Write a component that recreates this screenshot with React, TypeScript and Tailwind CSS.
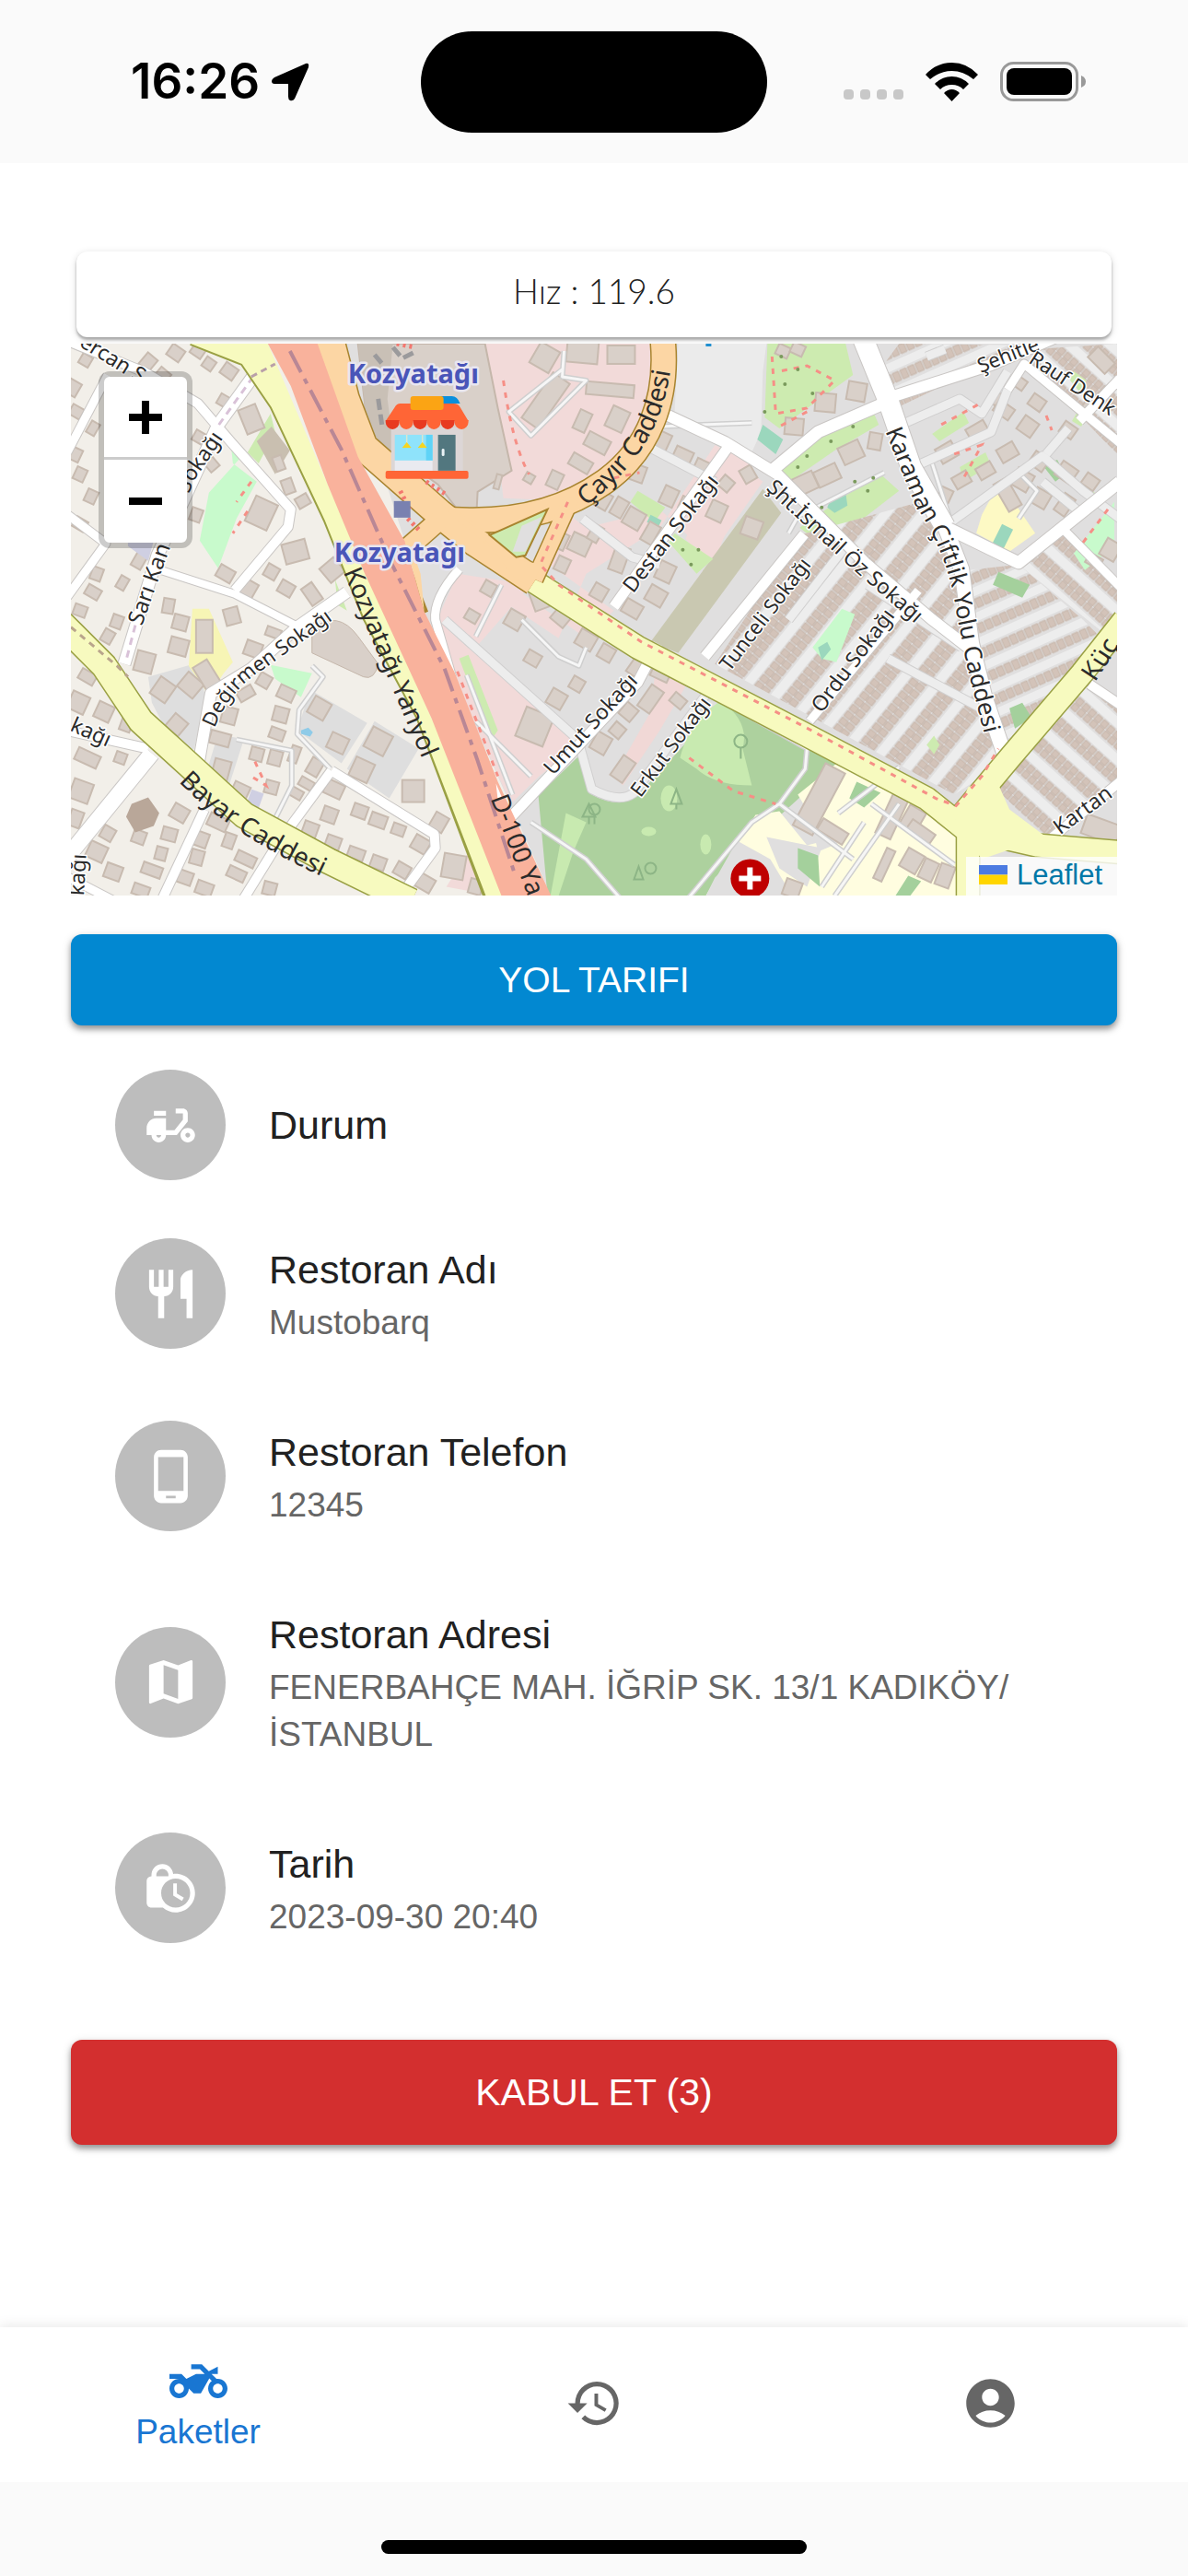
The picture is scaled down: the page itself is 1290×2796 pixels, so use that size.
import { useState } from 'react';
import type { IconType } from 'react-icons';
import {
  MdAccountCircle,
  MdHistory,
  MdLockClock,
  MdMap,
  MdMoped,
  MdRestaurant,
  MdTwoWheeler,
} from 'react-icons/md';

interface DetailRow {
  icon: IconType | typeof PhoneIcon;
  title: string;
  value?: string;
}

function PhoneIcon({ className }: { className?: string }) {
  return (
    <svg viewBox="0 0 24 24" fill="currentColor" className={className} aria-hidden="true">
      <path d="M16 1H8C6.340 1 5 2.340 5 4v16c0 1.660 1.340 3 3 3h8c1.660 0 3-1.340 3-3V4c0-1.660-1.340-3-3-3zm-2 20h-4v-1h4v1zm3.250-3H6.750V4h10.500v14z" />
    </svg>
  );
}

const DETAILS: DetailRow[] = [
  { icon: MdMoped, title: 'Durum' },
  { icon: MdRestaurant, title: 'Restoran Adı', value: 'Mustobarq' },
  { icon: PhoneIcon, title: 'Restoran Telefon', value: '12345' },
  { icon: MdMap, title: 'Restoran Adresi', value: 'FENERBAHÇE MAH. İĞRİP SK. 13/1 KADIKÖY/İSTANBUL' },
  { icon: MdLockClock, title: 'Tarih', value: '2023-09-30 20:40' },
];

const TABS: { id: string; label: string; icon: IconType }[] = [
  { id: 'packages', label: 'Paketler', icon: MdTwoWheeler },
  { id: 'history', label: 'Geçmiş', icon: MdHistory },
  { id: 'account', label: 'Hesap', icon: MdAccountCircle },
];

// x, y, width, height, rotation
type Building = [number, number, number, number, number];

const BUILDINGS: Building[] = [
  // west of the motorway
  [84, 20, 14, 16, 40], [100, 34, 14, 12, 40], [114, 10, 16, 14, 35], [138, 8, 14, 12, 35], [150, 22, 12, 12, 35], [172, 30, 16, 14, 35],
  [166, 62, 12, 12, 30], [196, 82, 20, 28, -22], [140, 102, 14, 12, 30], [152, 130, 12, 16, -40], [16, 18, 12, 12, 30], [2, 48, 14, 16, 30],
  [6, 74, 14, 12, 30], [24, 92, 10, 14, 30], [4, 120, 14, 14, 25], [10, 142, 12, 14, 25], [22, 166, 12, 14, 25], [10, 196, 14, 12, 30],
  [226, 130, 10, 16, -20], [236, 155, 12, 16, -20], [252, 171, 14, 12, -30], [207, 184, 26, 30, 25], [136, 186, 12, 14, 20],
  [244, 226, 26, 22, -15], [168, 250, 18, 14, 30], [218, 248, 14, 14, 30], [192, 266, 18, 18, 30], [234, 266, 16, 14, 30], [262, 272, 22, 14, 55],
  [284, 246, 20, 20, 50], [28, 250, 12, 14, 20], [24, 270, 16, 12, 30], [56, 260, 14, 10, -60], [74, 236, 16, 12, -60], [106, 285, 12, 16, 10],
  [10, 290, 14, 12, 20], [50, 302, 12, 14, 20], [119, 303, 16, 16, 15], [117, 329, 20, 18, 15], [175, 296, 16, 18, -15], [198, 332, 18, 16, 20],
  [80, 346, 20, 22, 15], [220, 314, 16, 10, 20], [40, 318, 12, 14, 30], [18, 362, 18, 12, 30], [8, 390, 20, 20, 25], [36, 400, 18, 18, 25],
  [100, 376, 20, 22, 35], [130, 371, 22, 20, 40], [190, 380, 18, 12, -30], [172, 404, 16, 18, 15], [210, 366, 14, 14, 30], [234, 380, 18, 14, 25],
  [228, 403, 16, 16, 15], [115, 414, 18, 18, 40], [60, 414, 12, 14, 20], [270, 396, 20, 20, 30], [290, 434, 20, 18, 25], [334, 432, 24, 24, 28],
  [316, 463, 22, 22, 25], [162, 429, 22, 14, 15], [224, 424, 16, 12, 20], [243, 446, 10, 18, 20], [163, 464, 18, 24, 15], [18, 450, 26, 14, 25],
  [54, 450, 12, 12, 20], [11, 486, 22, 22, 20], [5, 516, 14, 18, 20], [265, 460, 14, 18, 30], [256, 478, 16, 10, 30], [286, 484, 20, 16, 25],
  [372, 486, 24, 24, 0], [244, 488, 16, 10, 30], [218, 482, 14, 14, 15], [222, 450, 14, 16, 15], [184, 486, 18, 16, 25], [202, 446, 14, 14, 15],
  [281, 512, 16, 16, 20], [314, 508, 16, 14, 20], [334, 518, 18, 14, 20], [400, 520, 16, 18, 30], [380, 544, 18, 16, 30], [356, 528, 14, 12, 20],
  [260, 528, 16, 16, 20], [285, 542, 16, 14, 20], [310, 554, 18, 12, 20], [334, 564, 16, 14, 20], [360, 572, 16, 14, 30],
  [118, 510, 18, 16, 30], [40, 532, 14, 14, 30], [74, 536, 14, 14, 20], [107, 533, 16, 14, 15], [98, 554, 12, 14, 15], [28, 552, 20, 18, 25],
  [46, 574, 18, 16, 20], [88, 572, 22, 12, 20], [140, 538, 18, 16, 20], [137, 558, 14, 16, 15], [124, 580, 16, 14, 20], [145, 592, 18, 14, 20],
  [190, 560, 22, 12, 25], [180, 576, 20, 12, 25], [76, 594, 18, 12, 20], [160, 520, 22, 14, 25], [216, 592, 14, 14, 15], [172, 540, 12, 16, 20],
  [385, 586, 18, 16, 30], [416, 568, 24, 26, 10], [440, 590, 14, 16, 15],
  // around the shopping street
  [516, 62, 22, 60, 35], [515, 15, 24, 26, 30], [556, 8, 34, 26, 5], [598, 12, 30, 20, 0], [586, 50, 52, 14, 5], [594, 82, 20, 24, 25],
  [572, 108, 26, 16, 28], [556, 84, 14, 22, 25], [526, 148, 14, 18, 25], [554, 130, 24, 14, 30], [464, 150, 6, 16, 15], [498, 146, 10, 10, 30],
  [532, 214, 14, 18, 25], [553, 218, 22, 20, 25], [534, 240, 14, 16, 25], [508, 276, 26, 16, 70], [532, 298, 18, 14, 40], [482, 300, 18, 18, 30],
  [454, 266, 14, 14, 30], [436, 296, 14, 12, 30], [560, 322, 20, 18, 30], [502, 342, 16, 14, 30], [528, 386, 18, 18, 30], [582, 336, 16, 16, 30],
  [504, 416, 32, 34, 22], [550, 370, 14, 14, 30], [576, 434, 18, 20, 30], [606, 400, 16, 16, 40], [594, 420, 14, 14, 40], [630, 386, 28, 16, -55],
  [614, 352, 14, 18, 35], [642, 356, 20, 18, 25], [600, 462, 16, 26, 35], [660, 388, 16, 12, 40],
  [640, 106, 20, 22, 25], [664, 124, 20, 20, 25], [686, 136, 18, 18, 25], [614, 140, 20, 18, 20], [712, 152, 14, 14, 40], [736, 142, 14, 16, -30],
  [650, 166, 16, 20, 25], [668, 174, 12, 14, 25], [578, 170, 16, 18, 30], [596, 178, 14, 20, 30], [612, 190, 20, 20, 30], [630, 206, 14, 22, 30],
  [702, 182, 18, 20, 25], [740, 200, 20, 20, 20], [570, 206, 12, 18, 30], [596, 234, 16, 28, 20], [646, 248, 18, 20, 25], [636, 274, 20, 18, 30],
  [610, 288, 20, 16, 30], [574, 270, 16, 16, 30],
  // park side blocks north east
  [786, 90, 20, 18, 5], [820, 64, 22, 20, 5], [854, 52, 20, 20, 10], [848, 118, 24, 20, -25], [874, 106, 14, 18, 10], [798, 152, 24, 20, -25],
  [822, 143, 26, 18, -25], [774, 8, 14, 12, 25], [790, 6, 14, 12, 25],
  [1006, 60, 16, 14, 35], [1030, 42, 16, 12, 35], [1014, 72, 20, 14, 35], [1050, 64, 16, 14, 35], [1040, 90, 18, 18, 35], [986, 96, 22, 18, -30],
  [952, 118, 20, 18, -30], [1018, 118, 20, 16, -30], [994, 138, 18, 14, -30], [968, 148, 18, 14, -30], [1052, 128, 18, 16, 35], [1082, 140, 20, 18, 35],
  [1034, 148, 20, 20, 30], [1054, 168, 18, 18, 30], [1018, 164, 16, 34, -30], [1084, 94, 16, 14, 35], [1106, 70, 14, 12, 35], [1120, 18, 26, 16, 45],
  [1108, 150, 16, 14, 35], [950, 164, 14, 14, 25], [1080, 175, 14, 22, 35], [1130, 224, 18, 20, 30], [1112, 236, 16, 12, 30],
  // school and hospital blocks
  [813, 495, 24, 76, 28], [828, 530, 32, 14, 32], [892, 514, 18, 46, 25], [915, 516, 20, 24, 30], [884, 566, 10, 36, 25], [914, 562, 20, 22, 30],
  [932, 572, 16, 22, 25], [950, 578, 16, 24, 20], [784, 592, 18, 18, 20], [924, 530, 30, 12, 35], [1120, 528, 40, 22, 20],
];

interface Street {
  d: string;
  w: number;
}

const STREETS: Street[] = [
  { d: 'M859 -10 L888 61 L913 134 L950 199', w: 22 },
  { d: 'M950 199 L968 245 L979 326 L993 383 L1018 456', w: 16 },
  { d: 'M950 199 L1030 238 L1140 150', w: 13 },
  { d: 'M1073 196 L1140 264', w: 9 },
  { d: 'M638 73 L711 107 L768 142 L863 238 L935 299 L975 330', w: 12 },
  { d: 'M764 136 L812 96 L888 63', w: 13 },
  { d: 'M888 59 L1000 23 L1073 -8', w: 12 },
  { d: 'M718 107 L652 199 L590 286', w: 11 },
  { d: 'M797 207 L689 340', w: 11 },
  { d: 'M638 326 L616 368 L522 468 L471 522', w: 11 },
  { d: 'M921 268 L803 410', w: 9 },
  { d: 'M1140 476 L1062 540', w: 10 },
  { d: 'M1107 370 L1140 392', w: 10 },
  { d: 'M1096 84 L1140 38', w: 10 },
  { d: 'M1018 50 L1036 22 L1140 108', w: 9 },
  { d: 'M422 245 Q394 276 396 300 L414 362', w: 9 },
  { d: 'M202 30 L160 88 L116 184 L94 230 L58 348', w: 13 },
  { d: 'M-6 -4 L80 31 L138 65 L174 107 L239 180 L236 199 L178 268', w: 10 },
  { d: 'M94 245 L178 272 L254 311', w: 8 },
  { d: 'M300 270 L247 307 L196 353 L152 380 L138 460', w: 12 },
  { d: 'M-6 184 L38 217 L-4 275', w: 9 },
  { d: 'M40 34 L-4 118', w: 9 },
  { d: 'M-6 420 L84 440', w: 10 },
  { d: 'M88 445 L-6 560', w: 17 },
  { d: 'M-6 578 L48 606', w: 9 },
  { d: 'M145 506 L98 606', w: 10 },
  { d: 'M236 525 L186 606', w: 10 },
  { d: 'M283 464 L236 528', w: 10 },
  { d: 'M283 464 L395 533 L396 548 L364 592', w: 10 },
];

const LANES = [
  'M406 300 L551 430 L566 484 Q596 500 612 488 L700 368',
  'M620 108 L700 150', 'M556 190 L610 232 L640 240', 'M898 90 L966 60 L990 76 L1018 30', 'M916 134 L1000 96 L1018 50',
  'M948 200 L1056 122 L1100 160 L1140 190', 'M1060 120 L1084 92', 'M1056 150 L1100 186', 'M930 14 L950 6',
  'M866 262 L968 330', 'M888 342 L1000 402', 'M842 220 L780 300',
];

const PATHS = [
  'M500 520 L560 560 L600 606', 'M700 384 L800 440 L798 462 L770 500 L740 520 L668 606', 'M770 500 L850 560', 'M262 350 L274 362 L248 398 L246 424 L282 462',
  'M536 8 L534 36 L560 40 L500 100 L476 74 L534 28', 'M468 262 L440 318 M490 300 L530 340 L552 350 L560 330', 'M440 410 L500 470', 'M180 430 L240 442 L240 480 L220 520',
  'M780 206 L790 188 L884 140', 'M936 130 L956 192 L1000 160', 'M1030 140 L1050 160 L1030 190', 'M640 90 L740 86 M670 92 L732 116', 'M430 360 L480 490', 'M870 500 L960 566 M862 520 L816 590 M834 510 L900 460 M900 500 L830 600',
];

// dashed red footways
const FOOTWAYS = [
  'M470 40 Q480 110 498 142', 'M540 172 L510 240 L530 262 L620 324 L797 416 L940 494 L962 502 L990 470 L1008 440',
  'M672 450 L720 486 L766 500', 'M762 14 L766 76 L800 70 L830 40 L800 24 L770 30', 'M800 74 L770 90', 'M960 120 L990 110 L968 150', 'M946 88 L990 64',
  'M196 150 L180 172', 'M192 182 L176 206', 'M200 454 L212 480 L196 470', 'M1100 216 L1130 176', 'M1060 78 L1066 94', 'M590 146 L618 140', 'M420 356 L464 470',
];

interface StreetLabel {
  id: string;
  text: string;
  d: string;
  size: number;
  main?: boolean;
}

const LABELS: StreetLabel[] = [
  { id: 'cayir', text: 'Çayır Caddesi', d: 'M560 177 C612 135 652 90 655 -10', size: 28, main: true },
  { id: 'yanyol', text: 'Kozyatağı Yanyol', d: 'M296 248 C322 310 350 376 400 494', size: 28, main: true },
  { id: 'bayar', text: 'Bayar Caddesi', d: 'M117 476 Q182 544 330 604', size: 28, main: true },
  { id: 'd100', text: 'D-100 Ya', d: 'M456 494 L512 640', size: 28, main: true },
  { id: 'kucuk', text: 'Küç', d: 'M1113 368 L1170 280', size: 28, main: true },
  { id: 'degirmen', text: 'Değirmen Sokağı', d: 'M156 418 Q172 376 212 352 L310 282', size: 22 },
  { id: 'sari', text: 'Sarı Kan', d: 'M77 307 L112 210', size: 24 },
  { id: 'sari2', text: 'ya Sokağı', d: 'M118 192 L133 150 L196 58', size: 23 },
  { id: 'mercan', text: 'ercan S', d: 'M8 2 L150 90', size: 23 },
  { id: 'sokak1', text: 'kağı', d: 'M-2 420 L70 452', size: 23 },
  { id: 'sokak2', text: 'kağı', d: 'M14 600 L18 530', size: 23 },
  { id: 'umut', text: 'Umut Sokağı', d: 'M524 470 L640 342', size: 23 },
  { id: 'erkut', text: 'Erkut Sokağı', d: 'M619 494 L720 360', size: 22 },
  { id: 'tunceli', text: 'Tunceli Sokağı', d: 'M716 357 L826 213', size: 22 },
  { id: 'destan', text: 'Destan Sokağı', d: 'M611 272 L724 125', size: 23 },
  { id: 'ordu', text: 'Ordu Sokağı', d: 'M816 402 L914 272', size: 23 },
  { id: 'ismail', text: 'Şht.İsmail Öz Sokağı', d: 'M755 158 L844 240 L970 350', size: 23 },
  { id: 'karaman', text: 'Karaman Çiftlik Yolu Caddesi', d: 'M885 95 L918 176 Q954 230 962 290 L974 351 L1012 500', size: 26 },
  { id: 'sehit', text: 'Şehitle', d: 'M989 32 L1080 -4', size: 22 },
  { id: 'rauf', text: 'Rauf Denk', d: 'M1040 20 L1170 106', size: 22 },
  { id: 'kartan', text: 'Kartan', d: 'M1075 534 L1210 436', size: 23 },
];

function StoreMarker() {
  return (
    <g transform="translate(342 57)">
      <rect x="6" y="34" width="78" height="48" fill="#dcd6d6" />
      <rect x="10" y="42" width="41" height="28" fill="#8fe3fb" />
      <rect x="44" y="42" width="7" height="28" fill="#5fd3f7" />
      <rect x="10" y="70" width="41" height="11" fill="#e9eaf0" />
      <path d="M23 42v10M40 42v10" stroke="#d8e6d0" strokeWidth="1.5" />
      <path d="M18 56l5-6 5 6zM35 56l5-6 5 6z" fill="#f6d51f" />
      <rect x="57" y="42" width="19" height="39" fill="#52777f" />
      <rect x="61" y="57" width="3" height="8" rx="1.5" fill="#e9f2f5" />
      <path d="M60 0h12q6 0 9 8H60z" fill="#0b8fdc" />
      <path d="M10 12Q12 8 16 8H74Q79 8 81 12L90 27H0z" fill="#ff6536" />
      <rect x="27" y="0" width="36" height="15" rx="3" fill="#fba414" />
      {[0, 1, 2, 3, 4, 5].map((i) => (
        <path key={i} d={`M${i * 15} 26h15v2a7.5 8 0 0 1-15 0z`} fill={i % 2 ? '#ff6536' : '#e83a20'} />
      ))}
      <rect x="0" y="81" width="90" height="9" rx="2" fill="#ff6536" />
    </g>
  );
}

function CityMap() {
  return (
    <svg viewBox="0 0 1137 600" className="block h-auto w-full" role="img" aria-label="Kozyatağı haritası">
      <defs>
        {/* terraced houses with narrow lanes between them */}
        <pattern id="rows" width="9" height="32" patternUnits="userSpaceOnUse" patternTransform="translate(812 232) rotate(-51)">
          <rect width="9" height="32" fill="#e0dfdf" />
          <rect y="22" width="9" height="10" fill="#ededed" />
          <path d="M1 2h7v8H1zM1 11h7v8H1z" fill="#d3c3b9" stroke="#c6b5aa" strokeWidth="1" />
        </pattern>
        <pattern id="rowsEast" width="9" height="26" patternUnits="userSpaceOnUse" patternTransform="rotate(-24)">
          <rect width="9" height="26" fill="#e0dfdf" />
          <rect y="17" width="9" height="9" fill="#ededed" />
          <path d="M1 3h7v10H1z" fill="#d3c3b9" stroke="#c6b5aa" strokeWidth="1" />
        </pattern>
        <pattern id="rowsSouth" width="9" height="30" patternUnits="userSpaceOnUse" patternTransform="rotate(42)">
          <rect width="9" height="30" fill="#e0dfdf" />
          <rect y="20" width="9" height="10" fill="#ededed" />
          <path d="M1 2h7v7H1zM1 10h7v7H1z" fill="#d3c3b9" stroke="#c6b5aa" strokeWidth="1" />
        </pattern>
      </defs>

      <rect width="1137" height="600" fill="#f2efe9" />

      {/* land use */}
      <path d="M294 0H1137V600H522L384 291 363 215z" fill="#e0dfdf" />
      <path d="M450 0H636L640 60 600 140 540 180 520 240 590 290 560 320 480 264 421 250 410 320 436 410 480 490 551 440 500 390 440 330 470 280 530 320 560 250 640 200 700 110 740 130 700 236 640 180 560 200 520 170 470 168z" fill="#f2dad9" />
      <path d="M420 250L500 262 440 330 550 430 478 500 416 360 398 300z" fill="#f2dad9" />
      <path d="M711 118L752 150 690 238 668 212z" fill="#f2dad9" />
      <path d="M638 330L680 352 640 420 600 480 590 470 630 400z" fill="#f1d8d6" />
      <path d="M660 0H756L752 30 750 96 738 122 656 76z" fill="#ebebeb" />
      <path d="M757 0H842L850 34 770 92 754 80z" fill="#cdebb0" />
      <path d="M768 140L820 98 872 74 878 88 830 116 784 148zM792 200L878 140 900 160 830 214 812 216z" fill="#cdebb0" />
      <path d="M752 158L772 184 660 336 630 324z" fill="#c9c8b1" />
      <path d="M656 206L698 234 680 250 650 216zM616 160L646 178 634 194 608 172z" fill="#cdebb0" />
      <path d="M174 110L186 122 150 162 140 214 160 244 180 190 202 150 176 130zM217 349L262 358 250 384 222 364z" fill="#c8facc" />
      <path d="M217 76L222 96 204 130 192 118zM287 256L300 290 290 284z" fill="#cdebb0" />
      <path d="M202 106L218 90 238 116 222 142z" fill="#c9bfb0" />
      <path d="M84 362L140 346 146 386 134 440 118 448 88 390zM260 376L322 412 294 456 246 420zM330 410L378 440 346 494 300 462zM160 424L188 430 170 486 146 470z" fill="#dedede" />
      <path d="M132 288H150L176 346 166 358 150 382 128 350z" fill="#f7f5b5" />
      <path d="M262 310Q290 288 312 318L334 348Q330 366 318 362L262 336z" fill="#d9d0c9" stroke="#c5b7ab" />
      <path d="M422 342L432 338 464 420 456 432z" fill="#cdebb0" />
      <path d="M408 590L440 540 460 600z" fill="#f2dad9" />
      <path d="M312 0H450L464 70 479 138 442 161 441 180H420L399 153 341 111 322 88z" fill="#d9d0c9" stroke="#c5b7ab" strokeWidth="2" />
      <path d="M312 0H350L344 60 352 122 322 90z" fill="#c9c0b6" />
      <path d="M350 4L360 16 376 8M330 12L340 24M334 60L338 88" stroke="#9b9a9c" strokeWidth="5" strokeDasharray="12 5" fill="none" />

      {/* park */}
      <path d="M508 491L551 449 566 490Q596 506 616 491L711 387 841 449 769 514 700 580 690 600H518z" fill="#add19e" />
      <path d="M706 388Q738 410 730 440L740 480Q700 480 680 462L662 450Q672 410 706 388zM538 510L560 520 546 552 528 606H520z" fill="#c8eab0" />
      <ellipse cx="628" cy="530" rx="8" ry="5" fill="#c8eab0" />
      <ellipse cx="690" cy="544" rx="6" ry="11" fill="#c8eab0" />
      <ellipse cx="650" cy="494" rx="9" ry="14" fill="#c8eab0" />
      <g fill="none" stroke="#8db586" strokeWidth="2">
        <circle cx="728" cy="432" r="7" />
        <path d="M728 439v12M563 500l-7 14h14zM563 514v8M658 484l-6 16h12zM658 500v6" />
        <circle cx="569" cy="506" r="6" />
        <path d="M617 568l-5 14h10zM569 512v10" />
        <circle cx="630" cy="570" r="6" />
      </g>
      <path d="M841 449L964 504 976 536V600H690L744 512 770 508 800 545 820 540 790 490z" fill="#fffde0" />
      <path d="M724 540L760 560 784 600H690zM756 536L816 548 800 590 770 570zM800 500L840 540 812 552z" fill="#e0dfdf" />
      <path d="M854 476L880 488 862 504 846 494zM790 548L812 556 814 590 790 570zM910 578L924 584 912 600H896z" fill="#a4d09c" />

      {/* terraces */}
      <path d="M792 208L930 170 956 240 976 330 1012 456 960 490 700 348z" fill="url(#rows)" />
      <path d="M884 76L960 40 1000 20 1048 2 900 0 878 30z" fill="url(#rowsEast)" />
      <path d="M1048 6L1137 0V120L1044 24z" fill="url(#rowsSouth)" />
      <path d="M976 246L1030 240 1100 300 1130 330 1022 452 1004 430z" fill="url(#rowsEast)" />
      <path d="M1074 200L1137 268V326L1030 240z" fill="url(#rowsSouth)" />
      <path d="M1024 450L1106 366 1137 390V478L1062 540 1004 482z" fill="url(#rowsSouth)" />
      <path d="M936 98L970 74 976 86 944 106zM966 134L994 118 1000 132 970 150zM1096 70L1106 76 1098 90 1088 84zM1090 30l14 10-8 12-10-12z" fill="#cdebb0" />
      <path d="M990 186L1004 160 1022 168 1048 206 1020 226 984 206z" fill="#fdf9c4" />
      <path d="M1090 228L1134 172V220L1102 246zM838 288L852 294 832 346 816 342 806 330z" fill="#c8facc" />
      <path d="M752 88L774 104 766 120 746 104zM826 168L842 162 844 176 830 184 822 178zM1012 196L1024 202 1012 226 1002 216zM630 186l12 6-4 8-12-6zM812 330l10-6 4 8-10 12z" fill="#9bd7bd" />
      <path d="M1008 248L1042 262 1034 276 1002 262zM1056 132l16-6 8 16-10 8zM1020 396l14-6 10 16-18 12z" fill="#a4d09c" />
      <path d="M930 436l8-10 6 10-6 10zM1110 160l8 6-6 8z" fill="#cdebb0" />

      <g fill="#d9d0c9" stroke="#c8bbb0" strokeWidth="2">
        {BUILDINGS.map(([x, y, w, h, r]) => (
          <rect key={`${x}-${y}`} x={x - w / 2} y={y - h / 2} width={w} height={h} transform={`rotate(${r} ${x} ${y})`} />
        ))}
        <rect x="136" y="300" width="18" height="36" />
        <rect x="140" y="345" width="18" height="34" transform="rotate(-32 149 362)" />
      </g>
      <path d="M66 500L84 493 96 510 90 524 70 531 60 514z" fill="#b9a799" />
      <path d="M62 214h28l-6 22-22-16z" fill="#cfcfe2" />
      <path d="M250 420l8-3 5 5-3 5-10-3z" fill="#8fcbe8" />
      <rect x="193" y="486" width="14" height="18" fill="#cfcfe2" transform="rotate(20 200 495)" />

      {/* streets: casing first, fill on top */}
      <g fill="none" strokeLinejoin="round">
        <g stroke="#cfcfcf" strokeWidth="6">{PATHS.map((d) => <path key={d} d={d} />)}</g>
        <g stroke="#f6f6f6" strokeWidth="3">{PATHS.map((d) => <path key={d} d={d} />)}</g>
        <g stroke="#d0cfcf" strokeWidth="11">{LANES.map((d) => <path key={d} d={d} />)}</g>
        <g stroke="#ededed" strokeWidth="9">{LANES.map((d) => <path key={d} d={d} />)}</g>
        {STREETS.map((s) => <path key={s.d} d={s.d} stroke="#c9c6c4" strokeWidth={s.w + 2} />)}
        {STREETS.map((s) => <path key={s.d} d={s.d} stroke="#fff" strokeWidth={s.w} />)}
      </g>
      <path d="M198 36L158 92M70 306L60 344" stroke="#d9c2d8" strokeWidth="3" strokeDasharray="8 6" fill="none" />

      {/* secondary roads */}
      <g fill="none" strokeLinejoin="round">
        <g stroke="#9aa044">
          <path d="M-10 304L0 314 36 350 76 410 120 450 188 512 280 562 370 606" strokeWidth="30" />
          <path d="M490 250L616 330 797 424 930 494 975 530V606" strokeWidth="27" />
          <path d="M965 516L1022 448 1099 358 1145 300M975 528L1050 545 1145 553" strokeWidth="27" />
          <path d="M130 0L186 22 218 69 276 192 319 299 377 407 451 604" strokeWidth="4" />
        </g>
        <g stroke="#f7fabf">
          <path d="M-10 304L0 314 36 350 76 410 120 450 188 512 280 562 370 606" strokeWidth="27" />
          <path d="M490 250L616 330 797 424 930 494 975 530V606" strokeWidth="24" />
          <path d="M965 516L1022 448 1099 358 1145 300M975 528L1050 545 1145 553" strokeWidth="24" />
        </g>
      </g>
      <path d="M975 482L1004 470 1020 506 1060 536 990 560 960 520z" fill="#f7fabf" />
      <path d="M130 0L186 22 218 69 276 192 319 299 377 407 451 600H480L392 407 279 153 214 0z" fill="#f7fabf" />
      <path d="M0 308L50 350 62 362" stroke="#b9a58c" strokeWidth="3" strokeDasharray="7 6" fill="none" />
      <path d="M196 36L222 22" stroke="#b9a0a8" strokeWidth="3" strokeDasharray="7 5" fill="none" />

      {/* primary road and ramps */}
      <g fill="none" strokeLinejoin="round">
        <g stroke="#a8842f">
          <path d="M643 -6C650 60 628 116 580 150 538 180 480 198 400 190" strokeWidth="29" />
          <path d="M281 -6L298 60 318 112 400 184 440 216 504 258" strokeWidth="33" />
          <path d="M544 168L504 256" strokeWidth="20" />
          <path d="M400 192L366 222" strokeWidth="24" />
          <path d="M366 240L386 292" strokeWidth="5" />
        </g>
        <g stroke="#fcd6a4">
          <path d="M643 -6C650 60 628 116 580 150 538 180 480 198 400 190" strokeWidth="26" />
          <path d="M281 -6L298 60 318 112 400 184 440 216 504 258" strokeWidth="30" />
          <path d="M544 168L504 256" strokeWidth="17" />
          <path d="M400 192L366 222" strokeWidth="21" />
        </g>
      </g>
      <path d="M350 120L400 170 440 200 484 256 500 264 512 240 470 232 420 192z" fill="#fcd6a4" />
      <path d="M455 208L518 180 494 230 484 232z" fill="#cdebb0" stroke="#a8842f" strokeWidth="2" />
      <path d="M490 198L512 188 494 226 480 226z" fill="#e0dfdf" />

      {/* motorway */}
      <path d="M214 0L239 46 279 153 319 249 392 407 468 600H522L464 476 417 357 384 291 363 215 312 123 268 0z" fill="#f9b29c" />
      <path d="M363 215L384 291 380 250 370 222z" fill="#fcd6a4" />
      <path d="M238 8L294 115 348 238 406 353 442 453 482 575" stroke="#b98795" strokeWidth="4" strokeDasharray="26 8 6 8" fill="none" />
      <path d="M462 478l6 14-4 4z" fill="#fff" />

      <g fill="none" stroke="#f68f86" strokeWidth="3" strokeDasharray="6 7">
        {FOOTWAYS.map((d) => <path key={d} d={d} />)}
      </g>
      <path d="M358 160l10 20M366 190l12 12M386 150l22 14M354 0l20 4" stroke="#f3776f" strokeWidth="5" strokeDasharray="3 4" />
      <g fill="#7a9a5c">
        {[[772, 14], [790, 28], [776, 44], [806, 54], [754, 74], [826, 106], [850, 90], [800, 122], [790, 134], [852, 150], [872, 146], [816, 178], [866, 160], [665, 224], [682, 224], [674, 240]].map(([x, y]) => (
          <circle key={`${x}-${y}`} cx={x} cy={y} r="2" />
        ))}
      </g>
      <rect x="690" y="0" width="6" height="3" fill="#1f8fd0" />
      <rect x="351" y="171" width="18" height="18" fill="#7981b0" />
      <circle cx="738" cy="581" r="21" fill="#bf0000" />
      <path d="M726 581h24M738 569v24" stroke="#fff" strokeWidth="6" />

      {/* labels */}
      <g fontFamily="'Noto Sans', sans-serif" strokeLinejoin="round" style={{ paintOrder: 'stroke' }}>
        {LABELS.map((l) => (
          <g key={l.id}>
            <path id={`label-${l.id}`} d={l.d} fill="none" />
            <text fontSize={l.size} fill="#2b2b2b" stroke={l.main ? 'none' : '#ffffff'} strokeWidth="3">
              <textPath href={`#label-${l.id}`}>{l.text}</textPath>
            </text>
          </g>
        ))}
        <g fontSize="29" fontWeight="700" fill="#4a55b8" stroke="#e8e6f0" strokeWidth="5">
          <text x="301" y="43">Kozyatağı</text>
          <text x="286" y="237">Kozyatağı</text>
        </g>
      </g>

      <StoreMarker />
    </svg>
  );
}

function StatusBar() {
  return (
    <header className="grid h-[177px] grid-cols-[1fr_376px_1fr] items-center bg-[#fafafa]">
      <div className="flex items-center gap-3 pl-[142px]">
        <span className="font-['Inter',sans-serif] text-[53px] leading-none font-semibold text-black">16:26</span>
        <svg viewBox="0 0 42 42" className="size-[42px]" aria-hidden="true">
          <path d="M38 1Q42 0 41 5L26 39Q24 42 21 41 19 40 19 37V23H4Q1 23 1 20 1 18 4 16z" />
        </svg>
      </div>
      <div className="h-[110px] rounded-full bg-black" />
      <div className="flex items-center justify-end gap-6 pr-[110px]">
        <div className="mt-7 flex gap-[7px]" aria-hidden="true">
          <span className="size-[11px] rounded-[4px] bg-[#c8c8c8]" />
          <span className="size-[11px] rounded-[4px] bg-[#c8c8c8]" />
          <span className="size-[11px] rounded-[4px] bg-[#c8c8c8]" />
          <span className="size-[11px] rounded-[4px] bg-[#c8c8c8]" />
        </div>
        <svg viewBox="0 0 57 42" className="h-[42px] w-[57px]" aria-hidden="true">
          <path d="M0 13Q12 0 28.500 0T57 13L52 18Q41 9 28.500 9T5 18z" />
          <path d="M10 23Q18 15 28.500 15T47 23L41 29Q36 24 28.500 24T16 29z" />
          <path d="M20 33Q24 29 28.500 29T37 33L28.500 42z" />
        </svg>
        <svg viewBox="0 0 94 43" className="h-[43px] w-[94px]" aria-hidden="true">
          <rect x="1.500" y="1.500" width="82" height="40" rx="13" fill="none" stroke="#999" strokeWidth="3" />
          <rect x="7" y="7" width="71" height="29" rx="8" />
          <path d="M88 15q5 2 5 6.500t-5 6.500z" fill="#999" />
        </svg>
      </div>
    </header>
  );
}

function DetailItem({ icon: Icon, title, value }: DetailRow) {
  return (
    <li className="flex items-center px-12 py-6">
      <span className="flex size-[120px] shrink-0 items-center justify-center rounded-full bg-[#bdbdbd] text-white">
        <Icon className="size-[63px]" />
      </span>
      <div className={`ml-[47px] min-w-0 flex-1 ${value ? 'my-[18px]' : ''}`}>
        <p className="text-[43px] leading-[63px] text-[#212121]">{title}</p>
        {value && <p className="text-[37px] leading-[51px] break-words text-[#666]">{value}</p>}
      </div>
    </li>
  );
}

export default function App() {
  const [tab, setTab] = useState('packages');

  return (
    <div className="flex min-h-screen flex-col bg-white font-['Liberation_Sans',Arial,sans-serif]">
      <StatusBar />

      <main className="px-[77px] pt-[96px] pb-24">
        <div className="mx-1.5 flex h-[93px] items-center justify-center rounded-xl bg-white pb-2 shadow-[0_3px_3px_rgba(0,0,0,0.28),0_2px_9px_rgba(0,0,0,0.14)]">
          <p className="font-['Lato',sans-serif] text-[37px] leading-none font-light text-[#212121]">Hız : 119.6</p>
        </div>

        <section className="relative mt-[7px] overflow-hidden">
          <CityMap />
          <div className="absolute top-[30px] left-[30px] flex w-[102px] flex-col overflow-hidden rounded-xl border-6 border-black/20 bg-white bg-clip-padding">
            <button type="button" aria-label="Yakınlaştır" className="flex h-[90px] items-center justify-center border-b-3 border-[#ccc]">
              <svg viewBox="0 0 36 36" className="size-9"><path d="M18 0v36M0 18h36" stroke="#000" strokeWidth="8" /></svg>
            </button>
            <button type="button" aria-label="Uzaklaştır" className="flex h-[90px] items-center justify-center">
              <svg viewBox="0 0 36 36" className="size-9"><path d="M0 18h36" stroke="#000" strokeWidth="8" /></svg>
            </button>
          </div>
          <div className="absolute right-0 bottom-0 flex h-[42px] items-center gap-2.5 bg-white/80 pr-4 pb-1 pl-3.5">
            <svg viewBox="0 0 12 8" preserveAspectRatio="none" className="h-[21px] w-[31px]" aria-hidden="true">
              <path fill="#4C7BE1" d="M0 0h12v4H0z" />
              <path fill="#FFD500" d="M0 4h12v4H0z" />
            </svg>
            <a href="#leaflet" className="text-[31px] leading-none text-[#0078a8]">Leaflet</a>
          </div>
        </section>

        <button
          type="button"
          className="mt-[42px] flex h-[99px] w-full items-center justify-center rounded-xl bg-[#0288d1] text-[39px] text-white shadow-[0_4px_6px_rgba(0,0,0,0.35),0_3px_12px_rgba(0,0,0,0.14)]"
        >
          YOL TARIFI
        </button>

        <ul className="py-6">
          {DETAILS.map((row) => (
            <DetailItem key={row.title} {...row} />
          ))}
        </ul>

        <button
          type="button"
          className="mt-[42px] flex h-[114px] w-full items-center justify-center rounded-xl bg-[#d32f2f] text-[41px] text-white shadow-[0_4px_6px_rgba(0,0,0,0.35),0_3px_12px_rgba(0,0,0,0.14)]"
        >
          KABUL ET (3)
        </button>
      </main>

      <nav className="mt-auto grid h-[168px] grid-cols-3 bg-white pb-1 shadow-[0_-3px_12px_rgba(0,0,0,0.08)]">
        {TABS.map(({ id, label, icon: Icon }) => (
          <button
            key={id}
            type="button"
            aria-label={label}
            onClick={() => setTab(id)}
            className={`flex flex-col items-center justify-center ${tab === id ? 'text-[#1976d2]' : 'text-[#666]'}`}
          >
            <Icon className="size-[63px]" />
            {tab === id && <span className="text-[37px] leading-[48px]">{label}</span>}
          </button>
        ))}
      </nav>

      <footer className="flex h-[102px] items-end justify-center bg-[#fafafa] pb-6">
        <div className="h-[15px] w-[462px] rounded-full bg-black" />
      </footer>
    </div>
  );
}
